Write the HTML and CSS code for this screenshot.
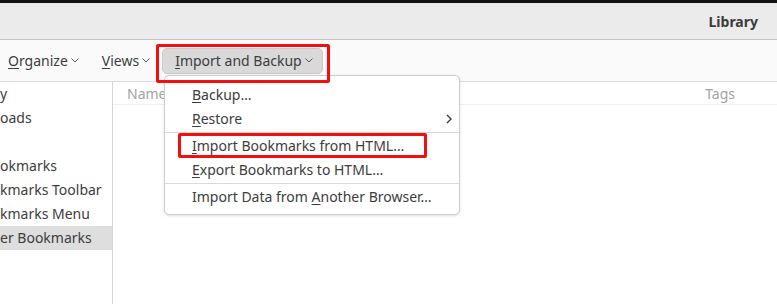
FILE: index.html
```html
<!DOCTYPE html>
<html lang="en">
<head>
    <meta charset="UTF-8">
    <title>Library</title>
    <link rel="stylesheet" href="styles.css">
</head>
<body>

<div class="window">
    <div class="titlebar">
        <span class="title">Library</span>
    </div>

    <div class="toolbar">
        <div class="tool-item">
            <span><u>O</u>rganize</span>
            <svg class="chevron" viewBox="0 0 8 5"><path d="M0.5 0.5l3.5 3.5 3.5-3.5" /></svg>
        </div>
        <div class="tool-item">
            <span><u>V</u>iews</span>
            <svg class="chevron" viewBox="0 0 8 5"><path d="M0.5 0.5l3.5 3.5 3.5-3.5" /></svg>
        </div>
        <div class="tool-item open">
            <span><u>I</u>mport and Backup</span>
            <svg class="chevron" viewBox="0 0 8 5"><path d="M0.5 0.5l3.5 3.5 3.5-3.5" /></svg>
            <span class="highlight highlight-button"></span>
        </div>
    </div>

    <div class="main">
        <ul class="sidebar">
            <li>y</li>
            <li>oads</li>
            <li></li>
            <li>okmarks</li>
            <li>kmarks Toolbar</li>
            <li>kmarks Menu</li>
            <li class="selected">er Bookmarks</li>
        </ul>
        <div class="content">
            <div class="columns">
                <span class="col-name">Name</span>
                <span class="col-tags">Tags</span>
            </div>
        </div>
    </div>

    <div class="menu">
        <div class="menu-item"><span><u>B</u>ackup…</span></div>
        <div class="menu-item"><span><u>R</u>estore</span>
            <svg class="submenu" viewBox="0 0 6 10"><path d="M1 1l4 4-4 4" /></svg>
        </div>
        <div class="menu-sep"></div>
        <div class="menu-item"><span><u>I</u>mport Bookmarks from HTML…</span>
            <span class="highlight highlight-item"></span>
        </div>
        <div class="menu-item"><span><u>E</u>xport Bookmarks to HTML…</span></div>
        <div class="menu-sep"></div>
        <div class="menu-item"><span>Import Data from <u>A</u>nother Browser…</span></div>
    </div>
</div>

</body>
</html>
```

FILE: styles.css
```css
* {
    box-sizing: border-box;
}

html, body {
    margin: 0;
    height: 100%;
}

body {
    font-family: "Noto Sans", "DejaVu Sans", sans-serif;
    font-size: 14px;
    color: #3d3d3d;
    background: #ffffff;
    overflow: hidden;
}

u {
    text-underline-offset: 2px;
}

.window {
    position: relative;
    height: 304px;
    border-top: 3px solid #121212;
    display: flex;
    flex-direction: column;
}

.titlebar {
    height: 37px;
    background-color: #ebebeb;
    border-bottom: 1px solid #c4c4c4;
    display: flex;
    align-items: center;
    justify-content: flex-end;
    padding-right: 19px;
}

.title {
    font-weight: 700;
    color: #3a3a3a;
}

.toolbar {
    height: 42px;
    background-color: #fafafa;
    border-bottom: 1px solid #dcdcdc;
    display: flex;
    align-items: center;
    padding-left: 8px;
    gap: 23px;
}

.tool-item {
    position: relative;
    display: flex;
    align-items: center;
    gap: 3px;
    height: 26px;
}

.tool-item.open {
    margin-left: -11px;
    padding: 0 9px 0 12px;
    background-color: #d9d9d9;
    border: 1px solid #c9c9c9;
    border-radius: 5px;
}

.chevron {
    width: 8px;
    height: 5px;
    fill: none;
    stroke: #5a5a5a;
    stroke-width: 1;
}

.highlight {
    position: absolute;
    border: 3px solid #f50e0e;
}

.highlight-button {
    left: -7px;
    right: -8px;
    top: -5px;
    bottom: -10px;
    border-radius: 2px;
    z-index: 2;
}

.main {
    flex: 1;
    display: flex;
}

.sidebar {
    list-style: none;
    margin: 0;
    padding: 0;
    width: 113px;
    border-right: 1px solid #d6d6d6;
    overflow: hidden;
    white-space: nowrap;
}

.sidebar li {
    height: 24px;
    line-height: 24px;
}

.sidebar li.selected {
    background-color: #dedede;
}

.content {
    flex: 1;
}

.columns {
    height: 23px;
    border-bottom: 1px solid #efefef;
    display: flex;
    align-items: center;
    color: #a3a3a3;
    padding-left: 14px;
}

.col-tags {
    margin-left: auto;
    margin-right: 42px;
}

.menu {
    position: absolute;
    z-index: 1;
    left: 164px;
    top: 72px;
    width: 296px;
    padding: 7px 0 5px 0;
    background: #ffffff;
    border: 1px solid #cdcdcd;
    border-radius: 5px;
    box-shadow: 0 1px 3px rgba(0, 0, 0, 0.12);
}

.menu-item {
    position: relative;
    height: 24px;
    line-height: 24px;
    padding-left: 27px;
    display: flex;
    align-items: center;
    white-space: pre;
}

.submenu {
    position: absolute;
    right: 7px;
    top: 7px;
    width: 6px;
    height: 10px;
    fill: none;
    stroke: #3d3d3d;
    stroke-width: 1.4;
}

.menu-sep {
    height: 1px;
    margin: 1px 0;
    background-color: #dadada;
}

.highlight-item {
    left: 13px;
    top: -1px;
    width: 249px;
    height: 25px;
    border-radius: 2px;
}
```
